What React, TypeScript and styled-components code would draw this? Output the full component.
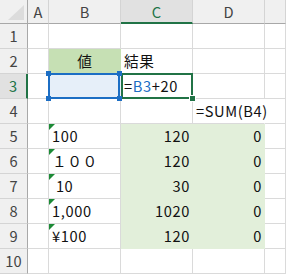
import React from "react";
import styled, { createGlobalStyle, css } from "styled-components";

const GlobalStyle = createGlobalStyle`
  html, body {
    margin: 0;
    padding: 0;
    background: #ffffff;
  }
  body {
    font-family: "Noto Sans CJK JP", "Noto Sans", sans-serif;
  }
`;

const GRID_LINE = "#dadada";
const HEADER_BG = "#f0f0f0";
const HEADER_SEL_BG = "#e1e1e1";
const HEADER_EDGE = "#a8a8a8";
const EXCEL_GREEN = "#217346";
const REF_BLUE = "#1c6ec4";
const FLAG_GREEN = "#1c8a36";
const LIGHT_GREEN = "#e2efda";
const HEAD_GREEN = "#c6e0b4";
const REF_FILL = "#e6eff9";

type Align = "left" | "right" | "center";

type CellData = {
  text?: React.ReactNode;
  align?: Align;
  fill?: string;
  flag?: boolean;
  spill?: boolean;
  mode?: "ref" | "active";
};

const Viewport = styled.div`
  width: 286px;
  height: 274px;
  overflow: hidden;
`;

const Grid = styled.div`
  display: grid;
  grid-template-columns: 28px 21px 72px 72px 72px 21px;
  grid-template-rows: 24px repeat(10, 25px);
  font-size: 14.67px;
  line-height: 18px;
  color: #111;
`;

const Corner = styled.div`
  position: relative;
  background: ${HEADER_BG};
  border-right: 1px solid ${HEADER_EDGE};
  border-bottom: 1px solid ${HEADER_EDGE};
  box-sizing: border-box;

  &::after {
    content: "";
    position: absolute;
    right: 3px;
    bottom: 3px;
    width: 16px;
    height: 15px;
    background: #dcdcdc;
    clip-path: polygon(100% 0, 100% 100%, 0 100%);
  }
`;

const ColHeader = styled.div<{ $selected?: boolean }>`
  display: flex;
  align-items: center;
  justify-content: center;
  box-sizing: border-box;
  overflow: hidden;
  background: ${(p) => (p.$selected ? HEADER_SEL_BG : HEADER_BG)};
  border-right: 1px solid #d4d4d4;
  border-bottom: ${(p) =>
    p.$selected ? `2px solid ${EXCEL_GREEN}` : `1px solid ${HEADER_EDGE}`};
  padding-top: ${(p) => (p.$selected ? "1px" : "0")};
  color: ${(p) => (p.$selected ? EXCEL_GREEN : "#444")};
`;

const RowHeader = styled.div<{ $selected?: boolean }>`
  display: flex;
  align-items: center;
  justify-content: center;
  box-sizing: border-box;
  background: ${(p) => (p.$selected ? HEADER_SEL_BG : HEADER_BG)};
  border-bottom: 1px solid #d4d4d4;
  border-right: ${(p) =>
    p.$selected ? `2px solid ${EXCEL_GREEN}` : `1px solid ${HEADER_EDGE}`};
  color: ${(p) => (p.$selected ? EXCEL_GREEN : "#444")};
`;

const Cell = styled.div<{ $align: Align; $fill?: string; $spill?: boolean }>`
  position: relative;
  display: flex;
  align-items: center;
  box-sizing: border-box;
  padding: 0 2px 0 3px;
  white-space: pre;
  letter-spacing: 0.6px;
  justify-content: ${(p) =>
    p.$align === "right"
      ? "flex-end"
      : p.$align === "center"
      ? "center"
      : "flex-start"};
  background: ${(p) => p.$fill ?? "transparent"};
  border-bottom: 1px solid ${(p) => p.$fill ?? GRID_LINE};
  border-right: 1px solid ${(p) => p.$fill ?? GRID_LINE};
  ${(p) =>
    p.$spill &&
    css`
      overflow: visible;
      z-index: 1;
      border-right-color: transparent;
    `}
`;

const Flag = styled.span`
  position: absolute;
  top: 0;
  left: 0;
  width: 6px;
  height: 6px;
  background: ${FLAG_GREEN};
  clip-path: polygon(0 0, 100% 0, 0 100%);
`;

const RefText = styled.span`
  color: ${REF_BLUE};
`;

const RefFrame = styled.span`
  position: absolute;
  top: -1px;
  left: -1px;
  right: 0;
  bottom: -1px;
  border: 2px solid ${REF_BLUE};
  z-index: 3;
  pointer-events: none;
`;

const Handle = styled.span<{ $x: "left" | "right"; $y: "top" | "bottom" }>`
  position: absolute;
  width: 5px;
  height: 5px;
  background: ${REF_BLUE};
  ${(p) => (p.$x === "left" ? "left: -4px;" : "right: -4px;")}
  ${(p) => (p.$y === "top" ? "top: -4px;" : "bottom: -4px;")}
`;

const ActiveFrame = styled.span`
  position: absolute;
  top: -1px;
  left: 0;
  right: -1px;
  bottom: -1px;
  border: 2px solid ${EXCEL_GREEN};
  z-index: 2;
  pointer-events: none;
`;

const FillHandle = styled.span`
  position: absolute;
  right: -4px;
  bottom: -4px;
  width: 5px;
  height: 5px;
  background: ${EXCEL_GREEN};
  outline: 1px solid #ffffff;
`;

const columns = [
  { key: "A", label: "A" },
  { key: "B", label: "B" },
  { key: "C", label: "C" },
  { key: "D", label: "D" },
  { key: "E", label: "" },
];
const activeCol = "C";
const activeRow = 3;

const sheet: Record<number, Record<string, CellData>> = {
  2: {
    B: { text: "値", align: "center", fill: HEAD_GREEN },
    C: { text: "結果" },
  },
  3: {
    B: { fill: REF_FILL, mode: "ref" },
    C: {
      text: (
        <>
          =<RefText>B3</RefText>+20
        </>
      ),
      mode: "active",
    },
  },
  4: {
    D: { text: "=SUM(B4)", spill: true },
  },
  5: {
    B: { text: "100", flag: true },
    C: { text: "120", align: "right", fill: LIGHT_GREEN },
    D: { text: "0", align: "right", fill: LIGHT_GREEN },
  },
  6: {
    B: { text: "１００", flag: true },
    C: { text: "120", align: "right", fill: LIGHT_GREEN },
    D: { text: "0", align: "right", fill: LIGHT_GREEN },
  },
  7: {
    B: { text: " 10", flag: true },
    C: { text: "30", align: "right", fill: LIGHT_GREEN },
    D: { text: "0", align: "right", fill: LIGHT_GREEN },
  },
  8: {
    B: { text: "1,000", flag: true },
    C: { text: "1020", align: "right", fill: LIGHT_GREEN },
    D: { text: "0", align: "right", fill: LIGHT_GREEN },
  },
  9: {
    B: { text: "¥100", flag: true },
    C: { text: "120", align: "right", fill: LIGHT_GREEN },
    D: { text: "0", align: "right", fill: LIGHT_GREEN },
  },
};

function SheetCell({ data }: { data?: CellData }) {
  const d = data ?? {};
  return (
    <Cell $align={d.align ?? "left"} $fill={d.fill} $spill={d.spill}>
      {d.flag && <Flag />}
      {d.text}
      {d.mode === "ref" && (
        <RefFrame>
          <Handle $x="left" $y="top" />
          <Handle $x="right" $y="top" />
          <Handle $x="left" $y="bottom" />
          <Handle $x="right" $y="bottom" />
        </RefFrame>
      )}
      {d.mode === "active" && (
        <ActiveFrame>
          <FillHandle />
        </ActiveFrame>
      )}
    </Cell>
  );
}

export default function App() {
  const rows = Array.from({ length: 10 }, (_, i) => i + 1);
  return (
    <>
      <GlobalStyle />
      <Viewport>
        <Grid>
          <Corner />
          {columns.map((c) => (
            <ColHeader key={c.key} $selected={c.key === activeCol}>
              {c.label}
            </ColHeader>
          ))}
          {rows.map((r) => (
            <React.Fragment key={r}>
              <RowHeader $selected={r === activeRow}>{r}</RowHeader>
              {columns.map((c) => (
                <SheetCell key={c.key} data={sheet[r]?.[c.key]} />
              ))}
            </React.Fragment>
          ))}
        </Grid>
      </Viewport>
    </>
  );
}
